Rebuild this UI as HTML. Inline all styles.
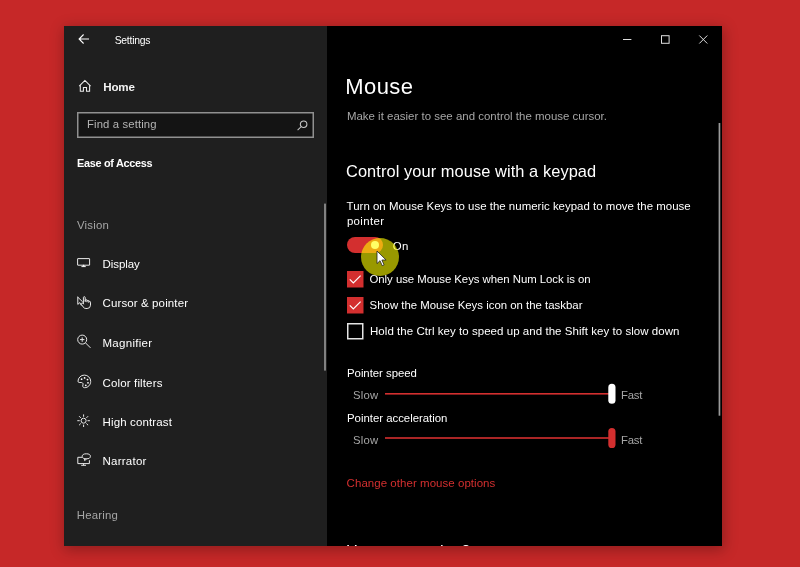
<!DOCTYPE html>
<html lang="en">
<head>
<meta charset="utf-8">
<title>Settings - Mouse</title>
<style>
*{box-sizing:border-box;margin:0;padding:0}
html,body{width:800px;height:567px;overflow:hidden;background:#c62828;}
body{position:relative;font-family:"Liberation Sans",sans-serif;}
.win{position:absolute;left:64px;top:26px;width:658px;height:520px;background:#000;box-shadow:1px 3px 13px 1px rgba(0,0,0,.28);overflow:hidden}
.side{position:absolute;left:0;top:0;width:263px;height:520px;background:#1f1f1f}
.layer{position:absolute;left:0;top:0;width:800px;height:567px;will-change:transform}
.t{position:absolute;white-space:nowrap}
.abs{position:absolute}
svg{position:absolute;overflow:visible}
</style>
</head>
<body>
<div class="win">
<div class="side"></div>
</div>
<div class="layer">

<svg style="left:78px;top:33px" width="12" height="12" viewBox="0 0 12 12" fill="none" stroke="#fff" stroke-width="1.1"><path d="M11 6H1.2M5.6 1.5L1.1 6l4.5 4.5"/></svg>
<div class="t" style="left:114.68px;top:34.80px;font-size:10.4px;line-height:12px;color:#fff;letter-spacing:-0.257px;">Settings</div>
<svg style="left:623px;top:35px" width="9" height="9" viewBox="0 0 9 9" fill="none" stroke="#dedede" stroke-width="1"><path d="M0 4.5h8.4"/></svg>
<svg style="left:661px;top:35px" width="9" height="9" viewBox="0 0 9 9" fill="none" stroke="#dedede" stroke-width="1"><rect x="0.5" y="0.7" width="7.6" height="7.6"/></svg>
<svg style="left:699px;top:35px" width="9" height="9" viewBox="0 0 9 9" fill="none" stroke="#dedede" stroke-width="1"><path d="M0.3 0.5l8 8M8.3 0.5L0.3 8.5"/></svg>
<svg style="left:78px;top:79px" width="14" height="14" viewBox="0 0 14 14" fill="none" stroke="#ececec" stroke-width="1.05" stroke-linejoin="miter"><path d="M1.2 7.1L6.9 1.4l5.7 5.7M2.3 6.2v6h3.1V8.5h3.1v3.7h3.1V6.2"/></svg>
<div class="t" style="left:103.20px;top:79.98px;font-size:11.6px;line-height:14px;color:#f4f4f4;font-weight:700;letter-spacing:-0.142px;">Home</div>
<svg style="left:77px;top:112px" width="237" height="26" viewBox="0 0 237 26"><rect x="0.75" y="0.75" width="235.5" height="24.5" fill="#141414" stroke="#909090" stroke-width="1.5"/></svg>
<div class="t" style="left:87.02px;top:117.08px;font-size:11.3px;line-height:14px;color:#b4b4b4;letter-spacing:0.133px;">Find a setting</div>
<svg style="left:296.6px;top:119.8px" width="11" height="11" viewBox="0 0 11 11" fill="none" stroke="#c8c8c8" stroke-width="1.05"><circle cx="6.6" cy="4.2" r="3.3"/><path d="M4.3 6.5L0.6 10.2"/></svg>
<div class="t" style="left:77.05px;top:156.72px;font-size:10.9px;line-height:13px;color:#fff;font-weight:700;letter-spacing:-0.308px;">Ease of Access</div>
<div class="t" style="left:76.92px;top:218.35px;font-size:11.4px;line-height:14px;color:#a6a6a6;letter-spacing:0.228px;">Vision</div>
<div class="t" style="left:102.51px;top:257.22px;font-size:11.5px;line-height:14px;color:#fff;letter-spacing:-0.056px;">Display</div>
<div class="t" style="left:102.51px;top:296.22px;font-size:11.5px;line-height:14px;color:#fff;letter-spacing:0.116px;">Cursor &amp; pointer</div>
<div class="t" style="left:102.51px;top:335.92px;font-size:11.5px;line-height:14px;color:#fff;letter-spacing:0.283px;">Magnifier</div>
<div class="t" style="left:102.51px;top:375.52px;font-size:11.5px;line-height:14px;color:#fff;letter-spacing:0.144px;">Color filters</div>
<div class="t" style="left:102.51px;top:414.72px;font-size:11.5px;line-height:14px;color:#fff;letter-spacing:0.135px;">High contrast</div>
<div class="t" style="left:102.51px;top:454.02px;font-size:11.5px;line-height:14px;color:#fff;letter-spacing:0.249px;">Narrator</div>
<div class="t" style="left:76.82px;top:507.65px;font-size:11.4px;line-height:14px;color:#a6a6a6;letter-spacing:0.18px;">Hearing</div>
<svg style="left:323px;top:203px" width="4" height="170" viewBox="0 0 4 170"><rect x="1.1" y="0.6" width="1.8" height="167" fill="#8c8c8c"/></svg>
<svg style="left:77px;top:258px" width="14" height="10" viewBox="0 0 14 10" fill="none" stroke="#e8e8e8" stroke-width="1"><rect x="0.6" y="0.6" width="12" height="6.6" rx="0.2"/><path d="M4.4 8.6h4.4" /><path d="M6.6 6.4l1.5 2.2H5.1z" fill="#fff" stroke="none"/></svg>
<svg style="left:77px;top:296px" width="15" height="13" viewBox="0 0 15 13" fill="none" stroke="#e8e8e8" stroke-width="1" stroke-linejoin="round" stroke-linecap="round"><path d="M0.8 1.2v7.2l2-1.8 1.4 2.6"/><path d="M0.8 1.2l4.6 4.4"/><path d="M6.4 7.6V1.6a0.9 0.9 0 0 1 1.8 0v4M8.2 4.4a0.9 0.9 0 0 1 1.8 0.2v1.2M10 5a0.9 0.9 0 0 1 1.8 0.3v1M11.8 5.8a0.9 0.9 0 0 1 1.7 0.4v3a3.4 3.4 0 0 1-3.4 3.3h-1.2a3.4 3.4 0 0 1-2.8-1.6L4.4 8.4a0.9 0.9 0 0 1 1.5-1l0.5 0.6"/></svg>
<svg style="left:77px;top:334px" width="15" height="15" viewBox="0 0 15 15" fill="none" stroke="#e8e8e8" stroke-width="1"><circle cx="5.2" cy="5.6" r="4.5"/><path d="M8.5 8.9l5 5M3 5.6h4.4M5.2 3.4v4.4"/></svg>
<svg style="left:76.5px;top:374px" width="15" height="15" viewBox="0 0 15 15" fill="none" stroke="#e8e8e8" stroke-width="1"><path d="M7.4 1.1a6.3 6.3 0 0 1 6.3 6.3c0 3.5-2.8 6.3-6 6.3-1.3 0-2-0.8-2-1.7 0-0.7 0.4-1.2 0.4-1.9 0-1-0.9-1.6-2.1-1.6H2.2C1.4 8.5 1 7.9 1 7.2a6.3 6.3 0 0 1 6.4-6.1z"/><g fill="#fff" stroke="none"><circle cx="4.6" cy="5.2" r="0.9"/><circle cx="7.6" cy="3.9" r="0.9"/><circle cx="10.5" cy="5.6" r="0.9"/><circle cx="11" cy="8.8" r="0.9"/><circle cx="8.8" cy="11.3" r="0.9"/></g></svg>
<svg style="left:77px;top:414.4px" width="14" height="14" viewBox="0 0 14 14" fill="none" stroke="#e8e8e8" stroke-width="1"><circle cx="6.6" cy="6.7" r="2.5"/><path d="M6.6 0.4v2.4M6.6 10.6V13M0.3 6.7h2.4M10.5 6.7h2.4M2.1 2.2l1.7 1.7M9.4 9.5l1.7 1.7M2.1 11.2l1.7-1.7M9.4 3.9l1.7-1.7"/></svg>
<svg style="left:77px;top:453px" width="15" height="14" viewBox="0 0 15 14" fill="none" stroke="#e8e8e8" stroke-width="1"><path d="M5 4.3H0.8v6.3h11.6V7.2M4.2 12.3h4.8M6.6 10.6v1.7"/><ellipse cx="9.3" cy="3.3" rx="4.1" ry="2.5"/><path d="M7.6 5.4v2.2l2.2-1.8" /></svg>
<div class="t" style="left:345.24px;top:74.08px;font-size:22px;line-height:26px;color:#fff;letter-spacing:0.443px;">Mouse</div>
<div class="t" style="left:346.91px;top:108.93px;font-size:11.45px;line-height:14px;color:#a6a6a6;letter-spacing:0.014px;">Make it easier to see and control the mouse cursor.</div>
<div class="t" style="left:346.02px;top:160.82px;font-size:16.4px;line-height:20px;color:#fff;letter-spacing:0.076px;">Control your mouse with a keypad</div>
<div class="t" style="left:346.61px;top:199.33px;font-size:11.45px;line-height:14px;color:#fff;letter-spacing:0.019px;">Turn on Mouse Keys to use the numeric keypad to move the mouse</div>
<div class="t" style="left:346.91px;top:214.33px;font-size:11.45px;line-height:14px;color:#fff;letter-spacing:0.348px;">pointer</div>
<div class="abs" style="left:347px;top:236.7px;width:36px;height:16.3px;border-radius:8.2px;background:#d32f2f"></div>
<div class="abs" style="left:370.9px;top:240.8px;width:8px;height:8px;border-radius:4px;background:#fff"></div>
<div class="t" style="left:392.71px;top:239.03px;font-size:11.45px;line-height:14px;color:#fff;letter-spacing:0.408px;">On</div>
<svg style="left:347px;top:271.2px" width="16.5" height="16.5" viewBox="0 0 16.5 16.5"><rect width="16.5" height="16.5" fill="#d32f2f"/><path d="M2.8 8.4l3.5 3.5 7.3-7.3" fill="none" stroke="#fff" stroke-width="1.2"/></svg>
<div class="t" style="left:369.52px;top:272.05px;font-size:11.4px;line-height:14px;color:#fff;letter-spacing:-0.045px;">Only use Mouse Keys when Num Lock is on</div>
<svg style="left:347px;top:296.8px" width="16.5" height="16.5" viewBox="0 0 16.5 16.5"><rect width="16.5" height="16.5" fill="#d32f2f"/><path d="M2.8 8.4l3.5 3.5 7.3-7.3" fill="none" stroke="#fff" stroke-width="1.2"/></svg>
<div class="t" style="left:369.62px;top:298.05px;font-size:11.4px;line-height:14px;color:#fff;letter-spacing:0.003px;">Show the Mouse Keys icon on the taskbar</div>
<svg style="left:347px;top:323.3px" width="16.5" height="16.5" viewBox="0 0 16.5 16.5"><rect x="0.75" y="0.75" width="15" height="15" fill="#000" stroke="#e4e4e4" stroke-width="1.5"/></svg>
<div class="t" style="left:370.01px;top:324.32px;font-size:11.5px;line-height:14px;color:#fff;letter-spacing:0.045px;">Hold the Ctrl key to speed up and the Shift key to slow down</div>
<div class="t" style="left:347.02px;top:366.05px;font-size:11.4px;line-height:14px;color:#fff;letter-spacing:-0.036px;">Pointer speed</div>
<div class="t" style="left:353.12px;top:388.08px;font-size:11.3px;line-height:14px;color:#a6a6a6;letter-spacing:0.185px;">Slow</div>
<svg style="left:385px;top:392px" width="226" height="4" viewBox="0 0 226 4"><rect x="0" y="1" width="226" height="1.6" fill="#d32f2f"/></svg>
<svg style="left:608px;top:383px" width="8" height="22" viewBox="0 0 8 22"><rect x="0.3" y="0.8" width="7.2" height="20" rx="3.6" fill="#fff"/></svg>
<div class="t" style="left:621.12px;top:388.08px;font-size:11.3px;line-height:14px;color:#a6a6a6;letter-spacing:-0.243px;">Fast</div>
<div class="t" style="left:347.02px;top:410.75px;font-size:11.4px;line-height:14px;color:#fff;letter-spacing:-0.017px;">Pointer acceleration</div>
<div class="t" style="left:353.12px;top:433.28px;font-size:11.3px;line-height:14px;color:#a6a6a6;letter-spacing:0.185px;">Slow</div>
<svg style="left:385px;top:436px" width="226" height="4" viewBox="0 0 226 4"><rect x="0" y="1.2" width="226" height="1.6" fill="#d32f2f"/></svg>
<svg style="left:608px;top:427px" width="8" height="22" viewBox="0 0 8 22"><rect x="0.3" y="1" width="7.2" height="20" rx="3.6" fill="#d32f2f"/></svg>
<div class="t" style="left:621.12px;top:433.28px;font-size:11.3px;line-height:14px;color:#a6a6a6;letter-spacing:-0.243px;">Fast</div>
<div class="t" style="left:346.61px;top:475.82px;font-size:11.5px;line-height:14px;color:#d32f2f;letter-spacing:0.04px;">Change other mouse options</div>
<svg style="left:717px;top:122px" width="4" height="295" viewBox="0 0 4 295"><rect x="1.6" y="1" width="1.7" height="292.7" fill="#9a9a9a"/></svg>
<div class="abs" style="left:327px;top:526px;width:395px;height:20px;overflow:hidden"><div class="t" style="left:19.02px;top:14.72px;font-size:16.4px;line-height:20px;color:#fff;letter-spacing:-0.221px;">Have a question?</div></div>
<div class="abs" style="left:360.6px;top:238px;width:38.4px;height:38.4px;border-radius:50%;background:rgba(255,255,0,.6)"></div>
<svg style="left:376px;top:250px" width="12" height="18" viewBox="0 0 12 18"><path d="M1 1v12.6l3-2.9 2.2 5 1.9-0.8-2.2-4.9h4.2z" fill="#fff" stroke="#222" stroke-width="0.8" stroke-linejoin="round"/></svg>
</div>
</body>
</html>
